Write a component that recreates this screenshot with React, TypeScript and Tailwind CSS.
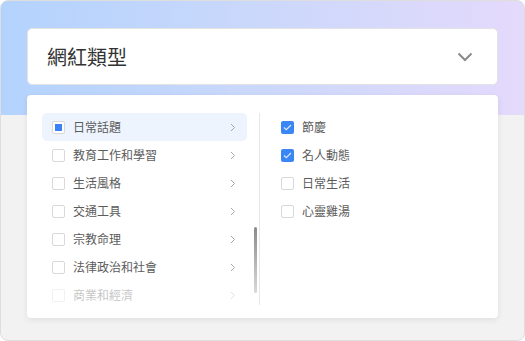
import React from "react";

const categories = ["日常話題", "教育工作和學習", "生活風格", "交通工具", "宗教命理", "法律政治和社會", "商業和經濟"];

const subs = [
  { label: "節慶", checked: true },
  { label: "名人動態", checked: true },
  { label: "日常生活", checked: false },
  { label: "心靈雞湯", checked: false },
];

const Chevron = () => (
  <svg width="6" height="9" viewBox="0 0 6 9" fill="none">
    <path d="M1 1l3.5 3.5L1 8" stroke="#a8a8a8" strokeWidth="1" />
  </svg>
);

const Box = ({ state }: { state: "none" | "partial" | "checked" }) => {
  if (state === "checked") {
    return (
      <span className="flex h-[13px] w-[13px] items-center justify-center rounded-[2px] bg-[#3b86f5]">
        <svg width="9" height="7" viewBox="0 0 9 7" fill="none">
          <path d="M1 3.5l2.3 2.2L8 1" stroke="#dbe8ff" strokeWidth="1.2" />
        </svg>
      </span>
    );
  }
  return (
    <span className="flex h-[13px] w-[13px] items-center justify-center rounded-[2px] border border-[#d9d9d9] bg-white">
      {state === "partial" && <span className="h-[7px] w-[7px] bg-[#3b82f6]" />}
    </span>
  );
};

export default function App() {
  return (
    <div
      className="flex h-[341px] w-[525px] flex-col gap-[10px] rounded-lg border border-[#dedede] bg-[#f2f2f2] bg-[linear-gradient(90deg,#b3d3fd,#cbd8fb_50%,#e4dafc)] bg-[length:100%_114px] bg-no-repeat px-[26px] pt-[27px]"
      style={{ fontFamily: '"Noto Sans CJK TC", "Noto Sans", sans-serif' }}
    >
      <div className="flex h-[57px] items-center justify-between rounded-[5px] border border-[#e3e3e3] bg-white pl-[19px] pr-[24px]">
        <span className="text-[20px] leading-none text-[#333]">網紅類型</span>
        <svg width="16" height="10" viewBox="0 0 16 10" fill="none">
          <path d="M1.5 1.5L8 8l6.5-6.5" stroke="#8a8a8a" strokeWidth="2" />
        </svg>
      </div>

      <div className="flex h-[223px] rounded-[4px] bg-white pb-[13px] pt-[18px] shadow-[0_2px_6px_rgba(0,0,0,0.08)]">
        <div className="relative flex w-[233px] flex-col overflow-hidden border-r border-[#e8e8e8] pl-[15px] pr-[12px]">
          {categories.map((c, i) => (
            <div
              key={c}
              className={`flex h-[28px] shrink-0 items-center rounded-[5px] pl-[10px] pr-[11px] ${i === 0 ? "bg-[#eef4fe]" : ""} ${i === 6 ? "opacity-35" : ""}`}
            >
              <Box state={i === 0 ? "partial" : "none"} />
              <span className="ml-[8px] flex-1 text-[12px] text-[#5c5c5c]">{c}</span>
              <Chevron />
            </div>
          ))}
          <span className="absolute right-[2px] top-[114px] h-[66px] w-[3px] rounded-full bg-[linear-gradient(180deg,#8a8a8a,#dadada)]" />
        </div>

        <div className="flex flex-col pl-[21px]">
          {subs.map((s) => (
            <div key={s.label} className="flex h-[28px] items-center">
              <Box state={s.checked ? "checked" : "none"} />
              <span className="ml-[8px] text-[12px] text-[#5c5c5c]">{s.label}</span>
            </div>
          ))}
        </div>
      </div>
    </div>
  );
}
